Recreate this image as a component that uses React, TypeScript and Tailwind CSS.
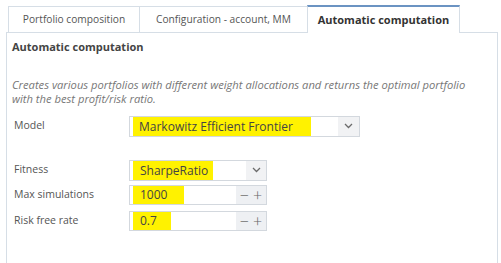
import React from 'react';

const Chevron = () => (
    <svg width="9" height="6" viewBox="0 0 9 6" fill="none">
        <path d="M1 1l3.5 3.5L8 1" stroke="#6b6b6b" strokeWidth="1.3" />
    </svg>
);

const Mark = ({ w }: { w: string }) => (
    <span className={`absolute left-[3px] top-0 bottom-0 bg-[#fff200] ${w}`} />
);

const Row = ({ label, children, className }: { label: string; children: React.ReactNode; className?: string }) => (
    <div className={`flex items-center ${className ?? ''}`}>
        <div className="w-[117px] pl-[2px] text-[10.5px]">{label}</div>
        {children}
    </div>
);

const Stepper = ({ value, mark }: { value: string; mark: string }) => (
    <div className="relative flex h-[20px] w-[138px] border border-[#d3d8de] bg-white">
        <Mark w={mark} />
        <div className="relative flex-1 pl-[10px] text-[12px] leading-[18px] text-[#444]">{value}</div>
        <div className="flex w-[30px] items-center justify-center gap-[4px] bg-[#eef0f3] text-[16px] font-light leading-none text-[#666]">
            <span>−</span>
            <span>+</span>
        </div>
    </div>
);

const App = () => {
    return (
        <div className="h-[263px] w-[501px] overflow-hidden bg-white font-['Open_Sans',sans-serif] text-[#555]">
            <div className="pl-[6px] pr-[3px] pt-[5px]">
                <div className="relative z-10 flex pl-[2px]">
                    <div className="mt-[1px] flex h-[26px] w-[132px] shrink-0 items-center justify-center whitespace-nowrap border border-b-0 border-[#d6dee6] text-[10.2px]">
                        Portfolio composition
                    </div>
                    <div className="-ml-px mt-[1px] flex h-[26px] w-[169px] shrink-0 items-center justify-center whitespace-nowrap border border-b-0 border-[#d6dee6] text-[10.2px]">
                        Configuration - account, MM
                    </div>
                    <div className="-ml-px flex h-[28px] w-[153px] shrink-0 items-center justify-center whitespace-nowrap border border-b-0 border-t-2 border-[#d6dee6] border-t-[#6b93c2] bg-white text-[11px] font-bold text-[#333]">
                        Automatic computation
                    </div>
                </div>
                <div className="-mt-px h-[240px] border border-[#d6dee6] pl-[5px] pt-[6px]">
                    <div className="text-[11px] font-bold text-[#444]">Automatic computation</div>
                    <p className="mt-[22px] text-[11.2px] italic leading-[14px] text-[#777]">
                        Creates various portfolios with different weight allocations and returns the optimal portfolio
                        <br />
                        with the best profit/risk ratio.
                    </p>
                    <Row label="Model" className="mt-[10px]">
                        <div className="relative flex h-[21px] w-[231px] border border-[#d3d8de] bg-white">
                            <Mark w="w-[178px]" />
                            <div className="relative flex-1 pl-[9px] text-[12px] leading-[19px] text-[#444]">
                                Markowitz Efficient Frontier
                            </div>
                            <div className="flex w-[21px] items-center justify-center bg-[#f1f2f4]">
                                <Chevron />
                            </div>
                        </div>
                    </Row>
                    <Row label="Fitness" className="mt-[23px]">
                        <div className="relative flex h-[21px] w-[138px] border border-[#d3d8de] bg-white">
                            <Mark w="w-[80px]" />
                            <div className="relative flex-1 pl-[10px] text-[12px] leading-[19px] text-[#444]">SharpeRatio</div>
                            <div className="flex w-[20px] items-center justify-center bg-[#f1f2f4]">
                                <Chevron />
                            </div>
                        </div>
                    </Row>
                    <Row label="Max simulations" className="mt-[4px]">
                        <Stepper value="1000" mark="w-[51px]" />
                    </Row>
                    <Row label="Risk free rate" className="mt-[6px]">
                        <Stepper value="0.7" mark="w-[38px]" />
                    </Row>
                </div>
            </div>
        </div>
    );
};

export default App;
